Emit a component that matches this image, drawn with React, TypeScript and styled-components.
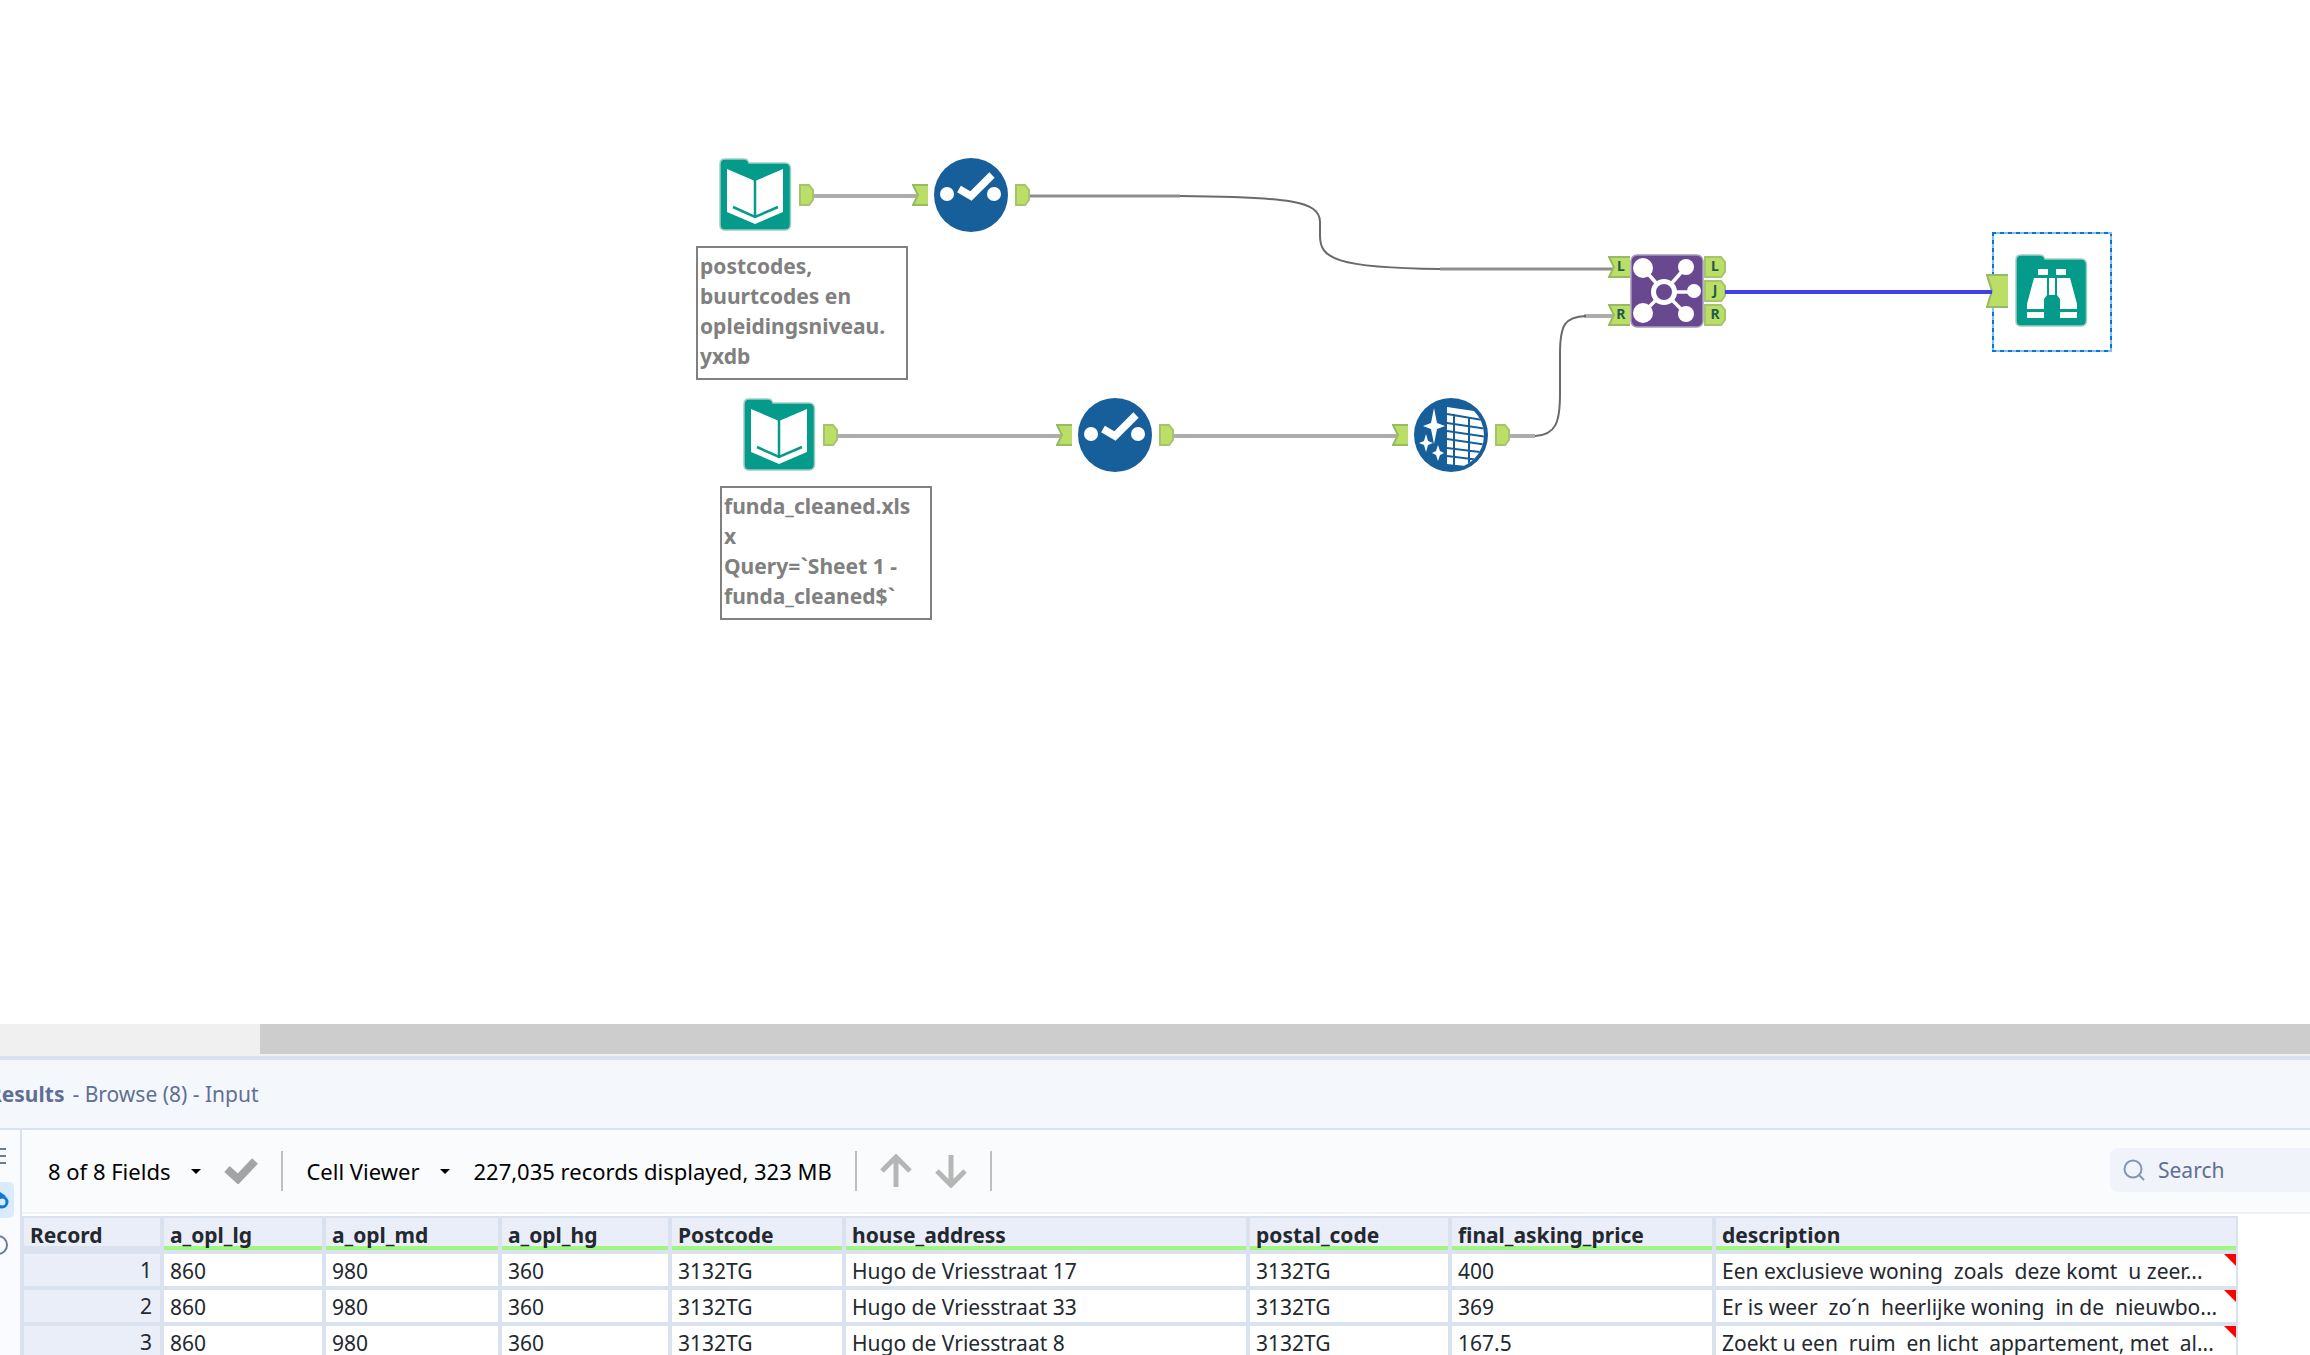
import React from "react";
import styled, { createGlobalStyle } from "styled-components";

const GlobalStyle = createGlobalStyle`
  * { box-sizing: border-box; }
  body { margin: 0; background: #ffffff; }
  body, button, input, table { font-family: "Noto Sans", "Open Sans", sans-serif; }
`;

const Window = styled.div`
  display: flex;
  flex-direction: column;
  height: 100vh;
  overflow: hidden;
`;

/* ---------- workflow canvas ---------- */

const Canvas = styled.main`
  position: relative;
  flex: 1 1 0;
  min-height: 0;
  overflow: hidden;
  background: #ffffff;
`;

const Wires = styled.svg`
  position: absolute;
  inset: 0;
  width: 100%;
  height: 100%;
  fill: none;
`;

const Placed = styled.div<{ $x: number; $y: number }>`
  position: absolute;
  left: ${(p) => p.$x}px;
  top: ${(p) => p.$y}px;
  line-height: 0;
`;

const Annotation = styled.div<{ $x: number; $y: number }>`
  position: absolute;
  left: ${(p) => p.$x}px;
  top: ${(p) => p.$y}px;
  width: 212px;
  height: 134px;
  padding: 3px 2px;
  border: 2px solid #808080;
  background: #ffffff;
  color: #808080;
  font-size: 21px;
  font-weight: 700;
  line-height: 30px;
  white-space: pre;
`;

const Selection = styled.div<{ $x: number; $y: number }>`
  position: absolute;
  left: ${(p) => p.$x}px;
  top: ${(p) => p.$y}px;
  width: 120px;
  height: 120px;
  padding: 2px;
  background: repeating-linear-gradient(90deg, #0078d7 0 4px, #8abdec 4px 8px) top / 100% 2px no-repeat,
    repeating-linear-gradient(90deg, #0078d7 0 4px, #8abdec 4px 8px) bottom / 100% 2px no-repeat,
    repeating-linear-gradient(180deg, #0078d7 0 4px, #8abdec 4px 8px) left / 2px 100% no-repeat,
    repeating-linear-gradient(180deg, #0078d7 0 4px, #8abdec 4px 8px) right / 2px 100% no-repeat;
`;

const AnchorLabel = styled.span`
  position: absolute;
  inset: 0;
  display: flex;
  align-items: center;
  justify-content: center;
  padding-bottom: 2px;
  color: #245a50;
  font-size: 14px;
  font-weight: 700;
  line-height: 20px;
`;

function InAnchor({ x, y, w = 16, h = 22, label }: { x: number; y: number; w?: number; h?: number; label?: string }) {
  return (
    <Placed $x={x} $y={y}>
      <svg width={w} height={h}>
        <path d={`M0 0H${w}V${h}H0L5 ${h / 2}Z`} fill="#bbde66" />
        <path d={`M${w} 1H1L6 ${h / 2}L1 ${h - 1}H${w}`} fill="none" stroke="#97bb62" strokeWidth="2" />
      </svg>
      {label && <AnchorLabel>&nbsp;{label}</AnchorLabel>}
    </Placed>
  );
}

function OutAnchor({ x, y, w = 15, label }: { x: number; y: number; w?: number; label?: string }) {
  return (
    <Placed $x={x} $y={y}>
      <svg width={w} height="22">
        <path d={`M1 1H${w - 5}L${w - 1} 6V16L${w - 5} 21H1Z`} fill="#bbde66" stroke="#a3c66c" strokeWidth="2" />
      </svg>
      {label && <AnchorLabel>{label}</AnchorLabel>}
    </Placed>
  );
}

function Folder() {
  return (
    <path
      d="M6 1H25Q28 1 29 3L30 5H66Q71.500 5 71.500 11V66Q71.500 72 66 72H6Q1 72 1 67V6Q1 1 6 1Z"
      fill="#059b8b"
      stroke="#9fcdc5"
      strokeWidth="1.500"
    />
  );
}

function InputTool({ x, y }: { x: number; y: number }) {
  return (
    <Placed $x={x} $y={y}>
      <svg width="73" height="74">
        <Folder />
        <path d="M8 11L36 23L64 11V54L36 66L8 54Z" fill="#ffffff" />
        <path d="M36 22V60M14 49L36 59L59 49" fill="none" stroke="#059b8b" strokeWidth="2.500" />
      </svg>
    </Placed>
  );
}

function SelectTool({ x, y }: { x: number; y: number }) {
  return (
    <Placed $x={x} $y={y}>
      <svg width="74" height="74">
        <circle cx="37" cy="37" r="37" fill="#175f9b" />
        <circle cx="13" cy="36" r="7" fill="#ffffff" />
        <circle cx="60" cy="36" r="7" fill="#ffffff" />
        <path d="M26 31L37 38L57 18" fill="none" stroke="#175f9b" strokeWidth="10" />
        <path d="M25 31L37 38L58 17" fill="none" stroke="#ffffff" strokeWidth="7.500" />
      </svg>
    </Placed>
  );
}

const sparkle = (cx: number, cy: number, rx: number, ry: number, k: number) =>
  `M${cx} ${cy - ry}L${cx + k} ${cy - k}L${cx + rx} ${cy}L${cx + k} ${cy + k}L${cx} ${cy + ry}L${cx - k} ${cy + k}L${cx - rx} ${cy}L${cx - k} ${cy - k}Z`;

function CleanseTool({ x, y }: { x: number; y: number }) {
  return (
    <Placed $x={x} $y={y}>
      <svg width="74" height="74">
        <defs>
          <clipPath id="sheet">
            <circle cx="36" cy="37" r="34" />
          </clipPath>
        </defs>
        <circle cx="37" cy="37" r="37" fill="#175f9b" />
        <g clipPath="url(#sheet)">
          <path d="M33 9L60 13L74 20V62L52 68L33 66Z" fill="#ffffff" />
          <path
            d="M33 16L74 23M33 25L74 31M33 33L74 39M33 41L74 47M33 50L74 55M33 58L74 63M40 16V68M55 19V68"
            stroke="#175f9b"
            strokeWidth="2"
          />
        </g>
        <path
          d={sparkle(20, 28, 11, 18, 3) + sparkle(12, 45, 7, 9, 2) + sparkle(24, 55, 6, 8, 2)}
          fill="#ffffff"
        />
      </svg>
    </Placed>
  );
}

function JoinTool({ x, y }: { x: number; y: number }) {
  return (
    <Placed $x={x} $y={y}>
      <svg width="74" height="74">
        <rect x="1" y="1" width="72" height="72" rx="6" fill="#684990" stroke="#a59abb" strokeWidth="1.500" />
        <path d="M13 14L34 38L13 59M56 13L34 38L56 60M34 38H64" stroke="#ffffff" strokeWidth="3.500" fill="none" />
        <g fill="#ffffff">
          <circle cx="13" cy="14" r="10" />
          <circle cx="13" cy="59" r="10" />
          <circle cx="56" cy="13" r="8" />
          <circle cx="56" cy="60" r="8" />
          <circle cx="64" cy="37" r="7" />
        </g>
        <circle cx="34" cy="38" r="10.500" fill="#684990" stroke="#ffffff" strokeWidth="5" />
      </svg>
    </Placed>
  );
}

function BrowseTool({ x, y }: { x: number; y: number }) {
  return (
    <Placed $x={x} $y={y}>
      <svg width="73" height="74">
        <Folder />
        <g fill="#ffffff">
          <path d="M23 15H33V21H23ZM41 15H51V21H41Z" />
          <path d="M19 24H32V41L29 45V55H12V50ZM55 24H42V41L45 45V55H62V50Z" />
          <path d="M34 24H40V41H34ZM12 58H29V64H12ZM45 58H62V64H45Z" />
        </g>
      </svg>
    </Placed>
  );
}

/* ---------- results pane ---------- */

const ScrollTrack = styled.div`
  flex: none;
  height: 32px;
  padding: 0 0 2px 260px;
  background: #f0f0f0;
`;

const ScrollThumb = styled.div`
  height: 100%;
  background: #cdcdcd;
`;

const Results = styled.section`
  flex: none;
  border-top: 4px solid #dae2f0;
`;

const ResultsHeader = styled.header`
  display: flex;
  align-items: center;
  gap: 8px;
  height: 70px;
  margin-left: -12px;
  border-bottom: 2px solid #dae2f0;
  background: #f4f8fd;
  color: #5f6f94;
  font-size: 21px;
  line-height: 30px;
  white-space: pre;
`;

const ResultsTitle = styled.h2`
  margin: 0;
  font-size: 21px;
  font-weight: 700;
`;

const ResultsBody = styled.div`
  display: grid;
  grid-template-columns: 22px minmax(0, 1fr);
  background: #fafbfe;
`;

const Rail = styled.nav`
  display: flex;
  flex-direction: column;
  gap: 8px;
  padding-top: 8px;
  border-right: 2px solid #dae2f0;
  overflow: hidden;
`;

const RailButton = styled.button<{ $active?: boolean }>`
  display: flex;
  align-items: center;
  justify-content: flex-end;
  width: 14px;
  height: 36px;
  padding: 0;
  border: 0;
  border-radius: 0 5px 5px 0;
  background: ${(p) => (p.$active ? "#d8ebff" : "transparent")};
  overflow: hidden;
`;

const Toolbar = styled.div`
  display: flex;
  align-items: center;
  gap: 23px;
  height: 84px;
  padding-left: 26px;
  border-bottom: 2px solid #f1f2f4;
  background: #fafbfd;
  color: #000000;
  font-size: 22px;
`;

const MenuButton = styled.button`
  display: flex;
  align-items: center;
  gap: 21px;
  padding: 0;
  border: 0;
  background: none;
  color: inherit;
  font-size: 22px;
  line-height: 30px;
  white-space: nowrap;
`;

const IconButton = styled.button`
  display: flex;
  padding: 0;
  border: 0;
  background: none;
`;

const Status = styled.span`
  white-space: nowrap;
`;

const Divider = styled.span`
  flex: none;
  width: 2px;
  height: 40px;
  background: #bdbfc1;
`;

const SearchBox = styled.label`
  display: flex;
  align-items: center;
  gap: 13px;
  width: 200px;
  height: 44px;
  margin: 0 0 2px auto;
  padding-left: 13px;
  border-radius: 8px 0 0 8px;
  background: #f0f3f9;
`;

const SearchInput = styled.input`
  flex: 1;
  min-width: 0;
  padding: 0;
  border: 0;
  outline: 0;
  background: none;
  color: #5f6f94;
  font-size: 21px;
  &::placeholder { color: #5f6f94; opacity: 1; }
`;

const GridArea = styled.div`
  height: 141px;
  padding-top: 2px;
  background: #ffffff;
  overflow: hidden;
`;

const Grid = styled.table`
  width: 2216px;
  table-layout: fixed;
  border-collapse: separate;
  border-spacing: 0;
  border-top: 2px solid #dae2f0;
  border-left: 2px solid #dae2f0;
  color: #24292f;
  font-size: 21px;
  text-align: left;
`;

const HeadCell = styled.th<{ $bar?: boolean }>`
  height: 36px;
  padding: 2px 6px 0;
  border-right: 4px solid #dae2f0;
  border-bottom: 4px solid #dae2f0;
  background: #eaeef9;
  box-shadow: ${(p) => (p.$bar ? "inset 0 -4px 0 #a0f780" : "inset 0 -4px 0 #dae2f0")};
  font-weight: 700;
  line-height: 30px;
  &:last-child { border-right-width: 2px; }
`;

const RecordCell = styled.th`
  padding: 0 8px 0 0;
  border-right: 4px solid #dae2f0;
  border-bottom: 4px solid #dae2f0;
  background: #eaeef9;
  font-weight: 400;
  line-height: 32px;
  text-align: right;
`;

const Cell = styled.td`
  position: relative;
  padding: 2px 6px 0;
  border-right: 4px solid #dae2f0;
  border-bottom: 4px solid #dae2f0;
  background: #ffffff;
  line-height: 30px;
  white-space: pre;
  &:last-child { border-right-width: 2px; }
`;

const TruncatedMark = styled.span`
  position: absolute;
  top: 0;
  right: 0;
  width: 12px;
  height: 12px;
  background: #ff0000;
  clip-path: polygon(0 0, 100% 0, 100% 100%);
`;

const columns = [
  { name: "a_opl_lg", width: 162 },
  { name: "a_opl_md", width: 176 },
  { name: "a_opl_hg", width: 170 },
  { name: "Postcode", width: 174 },
  { name: "house_address", width: 404 },
  { name: "postal_code", width: 202 },
  { name: "final_asking_price", width: 264 },
  { name: "description", width: 522 },
];

const records = [
  ["860", "980", "360", "3132TG", "Hugo de Vriesstraat 17", "3132TG", "400", "Een exclusieve woning  zoals  deze komt  u zeer..."],
  ["860", "980", "360", "3132TG", "Hugo de Vriesstraat 33", "3132TG", "369", "Er is weer  zo´n  heerlijke woning  in de  nieuwbo..."],
  ["860", "980", "360", "3132TG", "Hugo de Vriesstraat 8", "3132TG", "167.5", "Zoekt u een  ruim  en licht  appartement, met  al..."],
];

function Caret() {
  return (
    <svg width="10" height="5" viewBox="0 0 10 5">
      <path d="M0 0H10L5 5Z" fill="#000000" />
    </svg>
  );
}

function Arrow({ down }: { down?: boolean }) {
  return (
    <svg width="32" height="34" viewBox="0 0 32 34">
      <path
        d={down ? "M16 1V31M2 17L16 31L30 17" : "M16 33V3M2 17L16 3L30 17"}
        fill="none"
        stroke="#b5b7b7"
        strokeWidth="5"
      />
    </svg>
  );
}

export default function App() {
  return (
    <Window>
      <GlobalStyle />
      <Canvas>
        <Wires>
          <g stroke="#adadad" strokeWidth="4">
            <path d="M812 196H918M836 436H1062M1172 436H1398M1507 436H1535M1584 316H1614" />
          </g>
          <path d="M1028 196H1180" stroke="#8e8e8e" strokeWidth="3" />
          <path d="M1440 269H1614" stroke="#8e8e8e" strokeWidth="3" />
          <g stroke="#6a6a6a" strokeWidth="2">
            <path d="M1180 196C1290 197 1320 201 1320 222V236C1320 258 1335 268 1440 269" />
            <path d="M1535 436C1556 435 1560 422 1560 394V354C1560 324 1565 317 1586 316" />
          </g>
        </Wires>

        <InputTool x={719} y={158} />
        <OutAnchor x={799} y={184} />
        <InAnchor x={912} y={184} />
        <SelectTool x={934} y={158} />
        <OutAnchor x={1015} y={184} />
        <Annotation $x={696} $y={246}>{"postcodes,\nbuurtcodes en\nopleidingsniveau.\nyxdb"}</Annotation>

        <InputTool x={743} y={398} />
        <OutAnchor x={823} y={424} />
        <InAnchor x={1056} y={424} />
        <SelectTool x={1078} y={398} />
        <OutAnchor x={1159} y={424} />
        <Annotation $x={720} $y={486}>{"funda_cleaned.xls\nx\nQuery=`Sheet 1 -\nfunda_cleaned$`"}</Annotation>

        <InAnchor x={1392} y={424} />
        <CleanseTool x={1414} y={398} />
        <OutAnchor x={1495} y={424} />

        <InAnchor x={1608} y={256} w={22} label="L" />
        <InAnchor x={1608} y={304} w={22} label="R" />
        <JoinTool x={1630} y={254} />
        <OutAnchor x={1704} y={256} w={22} label="L" />
        <OutAnchor x={1704} y={280} w={22} label="J" />
        <OutAnchor x={1704} y={304} w={22} label="R" />

        <Selection $x={1992} $y={232} />
        <InAnchor x={1986} y={274} w={22} h={34} />
        <BrowseTool x={2015} y={254} />
        <Wires>
          <path d="M1725 292H1992" stroke="#3f3ff0" strokeWidth="4" />
        </Wires>
      </Canvas>

      <ScrollTrack>
        <ScrollThumb />
      </ScrollTrack>

      <Results>
        <ResultsHeader>
          <ResultsTitle>Results</ResultsTitle>
          <span>- Browse (8) - Input</span>
        </ResultsHeader>
        <ResultsBody>
          <Rail>
            <RailButton aria-label="Messages">
              <svg width="14" height="16">
                <path d="M0 1H6M0 8H6M0 15H6" stroke="#6b7a9c" strokeWidth="2" />
              </svg>
            </RailButton>
            <RailButton $active aria-label="Data">
              <svg width="14" height="20">
                <circle cx="2" cy="12" r="5" fill="none" stroke="#1276d6" strokeWidth="3" />
                <path d="M0 2L6 6L0 9Z" fill="#1276d6" />
              </svg>
            </RailButton>
            <RailButton aria-label="Metadata">
              <svg width="14" height="22">
                <circle cx="-2" cy="12" r="9" fill="none" stroke="#6b7a9c" strokeWidth="2" />
              </svg>
            </RailButton>
          </Rail>
          <div>
            <Toolbar>
              <MenuButton>
                8 of 8 Fields
                <Caret />
              </MenuButton>
              <IconButton aria-label="Apply">
                <svg width="34" height="26">
                  <path d="M3 11L14 21L31 3" fill="none" stroke="#a3a5a5" strokeWidth="8" />
                </svg>
              </IconButton>
              <Divider />
              <MenuButton>
                Cell Viewer
                <Caret />
              </MenuButton>
              <Status>227,035 records displayed, 323 MB</Status>
              <Divider />
              <IconButton aria-label="Previous">
                <Arrow />
              </IconButton>
              <IconButton aria-label="Next">
                <Arrow down />
              </IconButton>
              <Divider />
              <SearchBox>
                <svg width="22" height="22">
                  <circle cx="10" cy="10" r="8.500" fill="none" stroke="#8496b8" strokeWidth="2" />
                  <path d="M16 16L21 21" stroke="#8496b8" strokeWidth="2" />
                </svg>
                <SearchInput type="text" placeholder="Search" aria-label="Search" />
              </SearchBox>
            </Toolbar>
            <GridArea>
              <Grid>
                <colgroup>
                  <col style={{ width: 140 }} />
                  {columns.map((c) => (
                    <col key={c.name} style={{ width: c.width }} />
                  ))}
                </colgroup>
                <thead>
                  <tr>
                    <HeadCell scope="col">Record</HeadCell>
                    {columns.map((c) => (
                      <HeadCell key={c.name} scope="col" $bar>
                        {c.name}
                      </HeadCell>
                    ))}
                  </tr>
                </thead>
                <tbody>
                  {records.map((row, r) => (
                    <tr key={r}>
                      <RecordCell scope="row">{r + 1}</RecordCell>
                      {row.map((value, i) => (
                        <Cell key={i}>
                          {value}
                          {i === row.length - 1 && <TruncatedMark />}
                        </Cell>
                      ))}
                    </tr>
                  ))}
                </tbody>
              </Grid>
            </GridArea>
          </div>
        </ResultsBody>
      </Results>
    </Window>
  );
}
